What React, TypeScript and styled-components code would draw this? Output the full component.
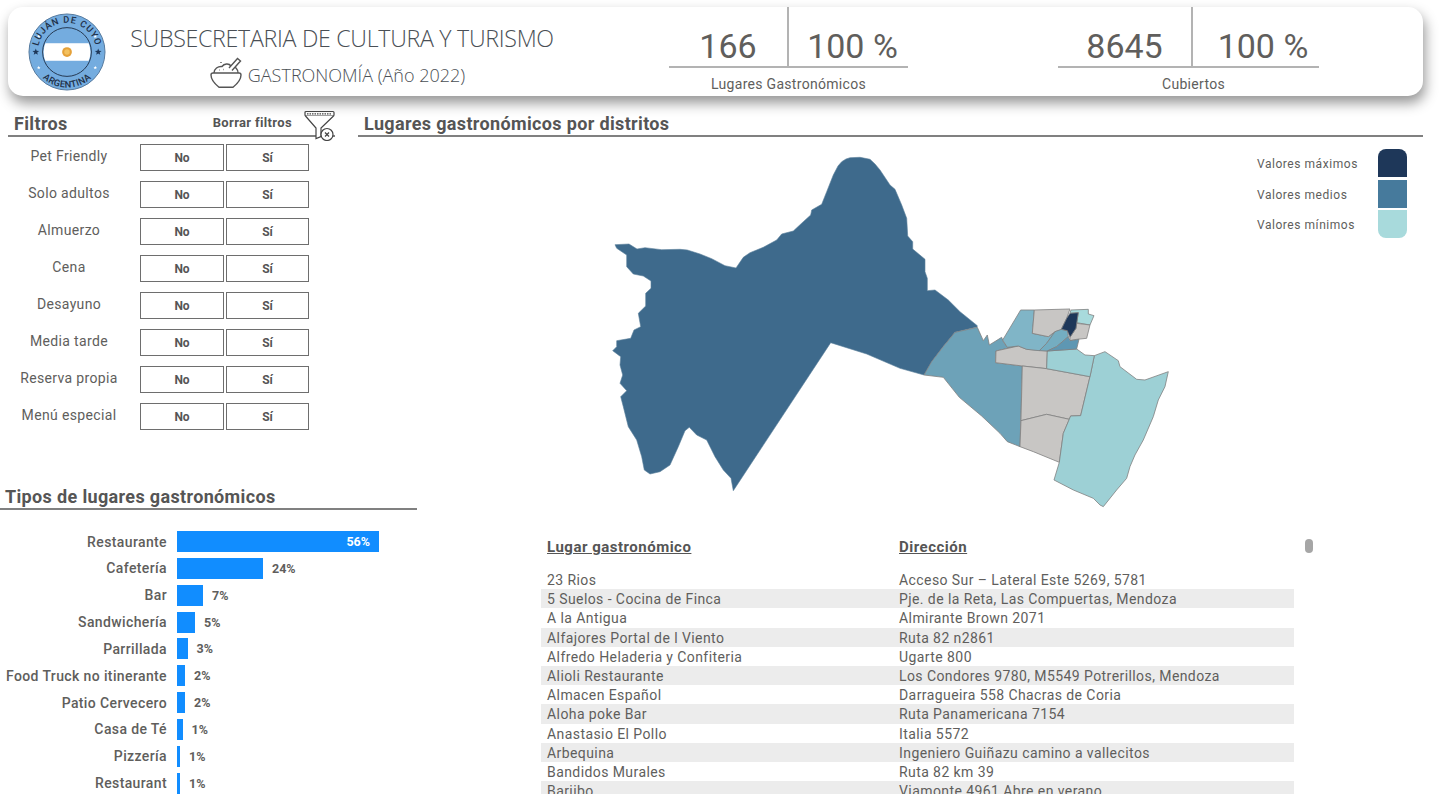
import React from "react";
import styled, { createGlobalStyle } from "styled-components";

const GlobalStyle = createGlobalStyle`
  html, body {
    margin: 0;
    background: #fff;
    overflow: hidden;
  }
  body {
    font-family: Roboto, "Liberation Sans", sans-serif;
    color: #605e5c;
  }
`;

const Page = styled.div`
  width: 1442px;
  height: 806px;
  overflow: hidden;
`;

const Header = styled.header`
  display: flex;
  align-items: stretch;
  width: 1415px;
  height: 89px;
  margin: 7px 0 0 8px;
  background: #fff;
  border-radius: 15px;
  box-shadow: 2px 7px 13px rgba(0, 0, 0, 0.42);
`;

const Logo = styled.svg`
  flex: none;
  width: 78px;
  height: 78px;
  margin: 6px 0 0 20px;
`;

const TitleBlock = styled.div`
  flex: none;
  width: 424px;
  margin-left: 24px;
  display: flex;
  flex-direction: column;
  align-items: center;
`;

const Title = styled.h1`
  margin: 15px 0 0;
  font-family: "Open Sans", sans-serif;
  font-size: 23.2px;
  line-height: 32px;
  font-weight: 300;
  color: #4a4f55;
  white-space: nowrap;
  letter-spacing: -0.3px;
`;

const SubTitle = styled.div`
  display: flex;
  align-items: flex-start;
  gap: 5px;
  margin-top: 3px;
  margin-left: -9px;
  font-family: "Open Sans", sans-serif;
  font-size: 18px;
  font-weight: 300;
  color: #4a4f55;
  white-space: nowrap;
`;

const SubTitleText = styled.span`
  margin-top: 6px;
  line-height: 24px;
`;

const Kpi = styled.div<{ $width: number; $left: number }>`
  flex: none;
  width: ${(p) => p.$width}px;
  margin-left: ${(p) => p.$left}px;
`;

const KpiValues = styled.div<{ $first: number }>`
  display: grid;
  grid-template-columns: ${(p) => p.$first}px 1fr;
  height: 59px;
  border-bottom: 2px solid #b3b3b3;
  box-sizing: content-box;
`;

const KpiValue = styled.div<{ $divider?: boolean; $inset?: number }>`
  display: flex;
  align-items: flex-end;
  justify-content: center;
  padding-left: ${(p) => p.$inset ?? 0}px;
  margin-bottom: -2px;
  font-size: 34px;
  line-height: 44px;
  color: #605e5c;
  border-right: ${(p) => (p.$divider ? "2px solid #b3b3b3" : "none")};
`;

const KpiLabel = styled.div<{ $inset?: number }>`
  margin-top: 8px;
  padding-left: ${(p) => p.$inset ?? 0}px;
  text-align: center;
  font-size: 14px;
  line-height: 16px;
  letter-spacing: 0.3px;
`;

const Board = styled.div`
  display: grid;
  grid-template-columns: 358px 59px 1fr;
  grid-template-rows: 373px 47px 1fr;
  margin-top: 14px;
  height: 696px;
`;

const SectionHead = styled.div<{ $pad: number; $trail?: number }>`
  display: flex;
  align-items: flex-end;
  justify-content: space-between;
  height: 25px;
  padding-left: ${(p) => p.$pad}px;
  margin-right: ${(p) => p.$trail ?? 0}px;
  border-bottom: 2px solid #808080;
`;

const SectionTitle = styled.h2`
  margin: 0;
  font-size: 18px;
  line-height: 22px;
  font-weight: 700;
  color: #555;
  letter-spacing: 0.35px;
  white-space: nowrap;
`;

const FilterPanel = styled.section`
  grid-column: 1;
  grid-row: 1;
  padding-left: 8px;
  width: 327px;
`;

const ClearFilters = styled.div`
  display: flex;
  align-items: center;
  gap: 12px;
  font-size: 13px;
  letter-spacing: 0.35px;
  font-weight: 700;
  color: #555;
`;

const FunnelIcon = styled.svg`
  width: 32px;
  height: 32px;
  margin: 0 -1px -6px 0;
  flex: none;
`;

const FilterList = styled.div`
  display: flex;
  flex-direction: column;
  gap: 10px;
  margin-top: 7px;
`;

const FilterRow = styled.div`
  display: grid;
  grid-template-columns: 130px 84px 83px;
  column-gap: 2px;
  height: 27px;
`;

const FilterLabel = styled.div`
  width: 122px;
  text-align: center;
  font-size: 14px;
  line-height: 25px;
  letter-spacing: 0.35px;
  color: #605e5c;
  white-space: nowrap;
`;

const FilterButton = styled.button`
  height: 27px;
  padding: 0;
  background: #fff;
  border: 1px solid #6e6e6e;
  font-family: inherit;
  font-size: 12px;
  font-weight: 700;
  color: #555;
`;

const MapPanel = styled.section`
  grid-column: 2 / 4;
  grid-row: 1 / 3;
  position: relative;
`;

const MapSvg = styled.svg`
  display: block;
  width: 1084px;
  height: 393px;
`;

const Legend = styled.div`
  position: absolute;
  top: 39px;
  left: 899px;
  display: flex;
  flex-direction: column;
  gap: 2.5px;
`;

const LegendRow = styled.div`
  display: flex;
  align-items: center;
  height: 28px;
`;

const LegendLabel = styled.span`
  width: 121px;
  padding-top: 2px;
  font-size: 12px;
  letter-spacing: 0.55px;
  color: #605e5c;
  white-space: nowrap;
`;

const LegendSwatch = styled.span<{ $color: string; $edge?: "top" | "bottom" }>`
  width: 29px;
  height: 28px;
  background: ${(p) => p.$color};
  border-radius: ${(p) =>
    p.$edge === "top" ? "8px 8px 0 0" : p.$edge === "bottom" ? "0 0 8px 8px" : "0"};
`;

const TypesPanel = styled.section`
  grid-column: 1 / 3;
  grid-row: 2 / 4;
`;

const BarList = styled.div`
  display: flex;
  flex-direction: column;
  gap: 5.85px;
  margin-top: 21px;
`;

const BarRow = styled.div`
  display: flex;
  align-items: center;
  height: 21px;
`;

const BarLabel = styled.span`
  flex: none;
  width: 167px;
  margin-right: 10px;
  text-align: right;
  font-size: 14px;
  font-weight: 500;
  letter-spacing: 0.38px;
  color: #605e5c;
  white-space: nowrap;
`;

const Bar = styled.div`
  display: flex;
  align-items: center;
  justify-content: flex-end;
  height: 21px;
  background: #118dff;
`;

const BarValue = styled.span<{ $inside?: boolean }>`
  margin: ${(p) => (p.$inside ? "0 9px 0 0" : "0 0 0 9px")};
  font-size: 12.5px;
  font-weight: 700;
  color: ${(p) => (p.$inside ? "#fff" : "#605e5c")};
`;

const TablePanel = styled.section`
  grid-column: 3;
  grid-row: 3;
  position: relative;
  margin-left: 124px;
  width: 753px;
  height: 264px;
`;

const TableClip = styled.div`
  height: 264px;
  overflow: hidden;
`;

const TableHead = styled.div`
  display: grid;
  grid-template-columns: 352px 1fr;
  height: 40px;
  padding: 7px 0 0 6px;
  box-sizing: border-box;
  font-size: 15px;
  line-height: 20px;
  font-weight: 700;
  letter-spacing: 0.5px;
  color: #555;
  text-decoration: underline;
`;

const TableRow = styled.div<{ $striped: boolean }>`
  display: grid;
  grid-template-columns: 352px 1fr;
  height: 19.2px;
  padding-left: 6px;
  background: ${(p) => (p.$striped ? "#ececec" : "#fff")};
  font-size: 14px;
  line-height: 20.5px;
  letter-spacing: 0.42px;
  color: #605e5c;
  white-space: nowrap;
`;

const ScrollThumb = styled.div`
  position: absolute;
  left: 764px;
  top: 9px;
  width: 8px;
  height: 14px;
  border-radius: 4px;
  background: #a6a6a6;
`;

const filters = [
  "Pet Friendly",
  "Solo adultos",
  "Almuerzo",
  "Cena",
  "Desayuno",
  "Media tarde",
  "Reserva propia",
  "Menú especial",
];

const types = [
  { name: "Restaurante", pct: "56%", width: 202, inside: true },
  { name: "Cafetería", pct: "24%", width: 86 },
  { name: "Bar", pct: "7%", width: 26 },
  { name: "Sandwichería", pct: "5%", width: 18 },
  { name: "Parrillada", pct: "3%", width: 10.5 },
  { name: "Food Truck no itinerante", pct: "2%", width: 8 },
  { name: "Patio Cervecero", pct: "2%", width: 8 },
  { name: "Casa de Té", pct: "1%", width: 5.5 },
  { name: "Pizzería", pct: "1%", width: 3 },
  { name: "Restaurant", pct: "1%", width: 3 },
];

const places = [
  ["23 Rios", "Acceso Sur – Lateral Este 5269, 5781"],
  ["5 Suelos - Cocina de Finca", "Pje. de la Reta, Las Compuertas, Mendoza"],
  ["A la Antigua", "Almirante Brown 2071"],
  ["Alfajores Portal de l Viento", "Ruta 82 n2861"],
  ["Alfredo Heladeria y Confiteria", "Ugarte 800"],
  ["Alioli Restaurante", "Los Condores 9780, M5549 Potrerillos, Mendoza"],
  ["Almacen Español", "Darragueira 558 Chacras de Coria"],
  ["Aloha poke Bar", "Ruta Panamericana 7154"],
  ["Anastasio El Pollo", "Italia 5572"],
  ["Arbequina", "Ingeniero Guiñazu camino a vallecitos"],
  ["Bandidos Murales", "Ruta 82 km 39"],
  ["Bariibo", "Viamonte 4961 Abre en verano"],
];

const BIG_DISTRICT =
  "615,244.7 629,244 637,249 645,247.7 661.7,249.7 680,249.3 687.3,250 700,254 711.7,258.7 725,265.7 736,268 743.3,257.3 750,252.7 763.3,247.3 776.7,240 781.7,234 793.3,231 803.3,221.7 810.7,215 811.7,210 821.7,204.3 826.7,191.7 833.3,175 838,166 841.7,161.7 846,159 850,157.7 860,157.3 870,159.3 875,164 880,170 890,185 895,189.3 901.7,205 906.7,218.3 907.7,236 912.7,241.7 912.7,249 925,259.3 925,271.7 927.3,278.3 927.3,290.7 935,290 948.3,300 960,311.7 977.3,325.7 977,327 955,332.3 943,346.7 931.7,361.7 924,375 900,368.3 866.7,354 830.7,342.7 733.3,490.7 731,478.3 723.3,470 715,456.7 706.7,440 696.7,435 689.3,427.3 685,430.7 678.3,446.7 670,465 660,471.7 650,474 644.3,470 641.7,456.7 636.7,440 628.3,426.7 623.3,406.7 620.7,396.7 626.7,390.7 620,383.3 622.7,375 620,365 620.7,356.7 612.7,350.7 616.7,346.7 616.7,340.7 625,339.3 630.7,338.3 634,330 640.7,326.7 638.3,313.3 645.7,306 645.7,293.3 651,288.3 651,281 643.3,276 633.3,274 626.7,266.7 626.7,255 616.7,248.3";

// traced at 3x from the crop, placed by the group's transform
const districts = [
  { fill: "#6da2b8", points: "165,127 232,112 250,152 262,135 268,165 305,142 310,155 322,172 355,168 288,183 287,218 367,228 360,470 322,455 300,430 245,378 178,322 130,262 72,255 95,215 130,170" },
  { fill: "#c8c6c4", points: "288,183 355,168 380,178 442,183 440,236 367,228 287,218" },
  { fill: "#c8c6c4", points: "367,228 440,236 570,260 542,377 512,378 508,388 440,373 363,392" },
  { fill: "#c8c6c4", points: "363,392 440,373 508,388 490,430 478,517 400,485 360,470" },
  { fill: "#9dd0d5", points: "583,197 615,185 655,212 660,230 710,268 735,270 805,245 795,290 775,330 760,380 730,450 705,495 690,530 680,565 650,600 610,650 600,645 580,625 520,600 462,570 478,517 490,430 512,378 542,377 570,260" },
  { fill: "#9dd0d5", points: "442,183 530,177 555,195 583,197 570,260 440,236" },
  { fill: "#80b5c7", points: "362,60 403,60 397,130 445,140 465,125 440,160 418,182 380,178 355,168 322,172 308,150" },
  { fill: "#c8c6c4", points: "403,60 510,57 500,85 483,120 465,125 445,140 397,130" },
  { fill: "#a8dadc", points: "513,60 565,58 565,72 582,77 570,105 530,98 535,68 510,70" },
  { fill: "#c8c6c4", points: "530,100 570,105 560,145 530,148 510,152 510,142 528,115" },
  { fill: "#74adc1", points: "465,125 484,118 502,122 505,140 470,170 442,183 418,182 440,160" },
  { fill: "#5e97b3", points: "505,140 510,152 537,148 530,177 442,183 470,170" },
  { fill: "#1e3759", points: "510,70 535,68 528,115 510,142 502,122 484,118 500,85" },
];

const star = (cx: number, cy: number, r: number) => {
  const pts: string[] = [];
  for (let i = 0; i < 10; i++) {
    const rad = i % 2 ? r * 0.42 : r;
    const a = (Math.PI / 5) * i - Math.PI / 2;
    pts.push(`${cx + rad * Math.cos(a)},${cy + rad * Math.sin(a)}`);
  }
  return pts.join(" ");
};

const App: React.FC = () => {
  return (
    <Page>
      <GlobalStyle />
      <Header>
        <Logo viewBox="0 0 80 80">
          <defs>
            <path id="logoTop" d="M10 40 a30 30 0 0 1 60 0" />
            <path id="logoBottom" d="M3.500 40 a36.500 36.500 0 0 0 73 0" />
            <clipPath id="logoInner">
              <circle cx="40" cy="40" r="24" />
            </clipPath>
          </defs>
          <circle cx="40" cy="40" r="39" fill="#74acdf" stroke="#54789c" strokeWidth="1" />
          <circle cx="40" cy="40" r="25" fill="#74acdf" stroke="#24364f" strokeWidth="1" />
          <g clipPath="url(#logoInner)">
            <rect x="15" y="31" width="50" height="18" fill="#fff" />
          </g>
          <circle cx="40" cy="40" r="5" fill="#e5a139" />
          <circle cx="40" cy="40" r="2.800" fill="#f3c15f" />
          <polygon points={star(8, 40, 3.600)} fill="#1e3759" />
          <polygon points={star(72, 40, 3.600)} fill="#1e3759" />
          <polygon points={star(11, 24, 2)} fill="#fff" />
          <polygon points={star(69, 24, 2)} fill="#fff" />
          <polygon points={star(11, 56, 2)} fill="#fff" />
          <polygon points={star(69, 56, 2)} fill="#fff" />
          <text fontFamily="Roboto, sans-serif" fontSize="9.5" fontWeight="500" fill="#1e2f47" letterSpacing="0.9">
            <textPath href="#logoTop" startOffset="50%" textAnchor="middle">LUJÁN DE CUYO</textPath>
          </text>
          <text fontFamily="Roboto, sans-serif" fontSize="9.5" fontWeight="500" fill="#1e2f47" letterSpacing="0.3">
            <textPath href="#logoBottom" startOffset="50%" textAnchor="middle">ARGENTINA</textPath>
          </text>
        </Logo>
        <TitleBlock>
          <Title>SUBSECRETARIA DE CULTURA Y TURISMO</Title>
          <SubTitle>
            <svg width="33" height="31" viewBox="0 0 33 31" fill="none" stroke="#555" strokeWidth="1.4">
              <path d="M1 18a2 2 0 0 1 2-2h26a2 2 0 0 1 2 2c0 5-4 9-8 12.300H9C5 27 1 23 1 18z" />
              <path d="M4 16c0-4 4-7 8-6.500 2-3 7-3.500 9-.5 4 0 7 3 7 7" />
              <path d="M19 11l8.500-9.500 3 2.500-8.500 9.500" fill="#fff" />
              <path d="M9 13h.5M13 12.500h.5M11 5v1" />
            </svg>
            <SubTitleText>GASTRONOMÍA (Año 2022)</SubTitleText>
          </SubTitle>
        </TitleBlock>
        <Kpi $width={239} $left={115}>
          <KpiValues $first={120}>
            <KpiValue $divider>166</KpiValue>
            <KpiValue $inset={8}>100 %</KpiValue>
          </KpiValues>
          <KpiLabel>Lugares Gastronómicos</KpiLabel>
        </Kpi>
        <Kpi $width={261} $left={150}>
          <KpiValues $first={135}>
            <KpiValue $divider>8645</KpiValue>
            <KpiValue $inset={14}>100 %</KpiValue>
          </KpiValues>
          <KpiLabel $inset={10}>Cubiertos</KpiLabel>
        </Kpi>
      </Header>

      <Board>
        <FilterPanel>
          <SectionHead $pad={6}>
            <SectionTitle>Filtros</SectionTitle>
            <ClearFilters>
              Borrar filtros
              <FunnelIcon viewBox="0 0 32 32" fill="none" stroke="#444" strokeWidth="1.2">
                <rect x="1" y="2.500" width="29" height="4.500" rx="1" />
                <path d="M3 4.800h25" strokeDasharray="1.500 1" />
                <path d="M1.500 7L12 19v10.500l5-2V19L29.500 7" fill="#fff" />
                <circle cx="23" cy="25.500" r="6" fill="#fff" />
                <path d="M21 23.500l4 4M25 23.500l-4 4" />
              </FunnelIcon>
            </ClearFilters>
          </SectionHead>
          <FilterList>
            {filters.map((name) => (
              <FilterRow key={name}>
                <FilterLabel>{name}</FilterLabel>
                <FilterButton>No</FilterButton>
                <FilterButton>Sí</FilterButton>
              </FilterRow>
            ))}
          </FilterList>
        </FilterPanel>

        <MapPanel>
          <SectionHead $pad={6} $trail={19}>
            <SectionTitle>Lugares gastronómicos por distritos</SectionTitle>
          </SectionHead>
          <MapSvg viewBox="358 137 1084 393">
            <polygon points={BIG_DISTRICT} fill="#3e6a8c" stroke="#5b7f9b" strokeWidth="0.6" strokeLinejoin="round" />
            <g transform="translate(900 290) scale(0.3333)" stroke="#808080" strokeWidth="2.4" strokeLinejoin="round">
              {districts.map((d) => (
                <polygon key={d.points} points={d.points} fill={d.fill} />
              ))}
            </g>
          </MapSvg>
          <Legend>
            <LegendRow>
              <LegendLabel>Valores máximos</LegendLabel>
              <LegendSwatch $color="#1e3759" $edge="top" />
            </LegendRow>
            <LegendRow>
              <LegendLabel>Valores medios</LegendLabel>
              <LegendSwatch $color="#467a9c" />
            </LegendRow>
            <LegendRow>
              <LegendLabel>Valores mínimos</LegendLabel>
              <LegendSwatch $color="#a8dadc" $edge="bottom" />
            </LegendRow>
          </Legend>
        </MapPanel>

        <TypesPanel>
          <SectionHead $pad={5}>
            <SectionTitle>Tipos de lugares gastronómicos</SectionTitle>
          </SectionHead>
          <BarList>
            {types.map((t) => (
              <BarRow key={t.name}>
                <BarLabel>{t.name}</BarLabel>
                <Bar style={{ width: t.width }}>
                  {t.inside && <BarValue $inside>{t.pct}</BarValue>}
                </Bar>
                {!t.inside && <BarValue>{t.pct}</BarValue>}
              </BarRow>
            ))}
          </BarList>
        </TypesPanel>

        <TablePanel>
          <TableClip>
            <TableHead>
              <span>Lugar gastronómico</span>
              <span>Dirección</span>
            </TableHead>
            {places.map(([place, address], i) => (
              <TableRow key={place} $striped={i % 2 === 1}>
                <span>{place}</span>
                <span>{address}</span>
              </TableRow>
            ))}
          </TableClip>
          <ScrollThumb />
        </TablePanel>
      </Board>
    </Page>
  );
};

export default App;
